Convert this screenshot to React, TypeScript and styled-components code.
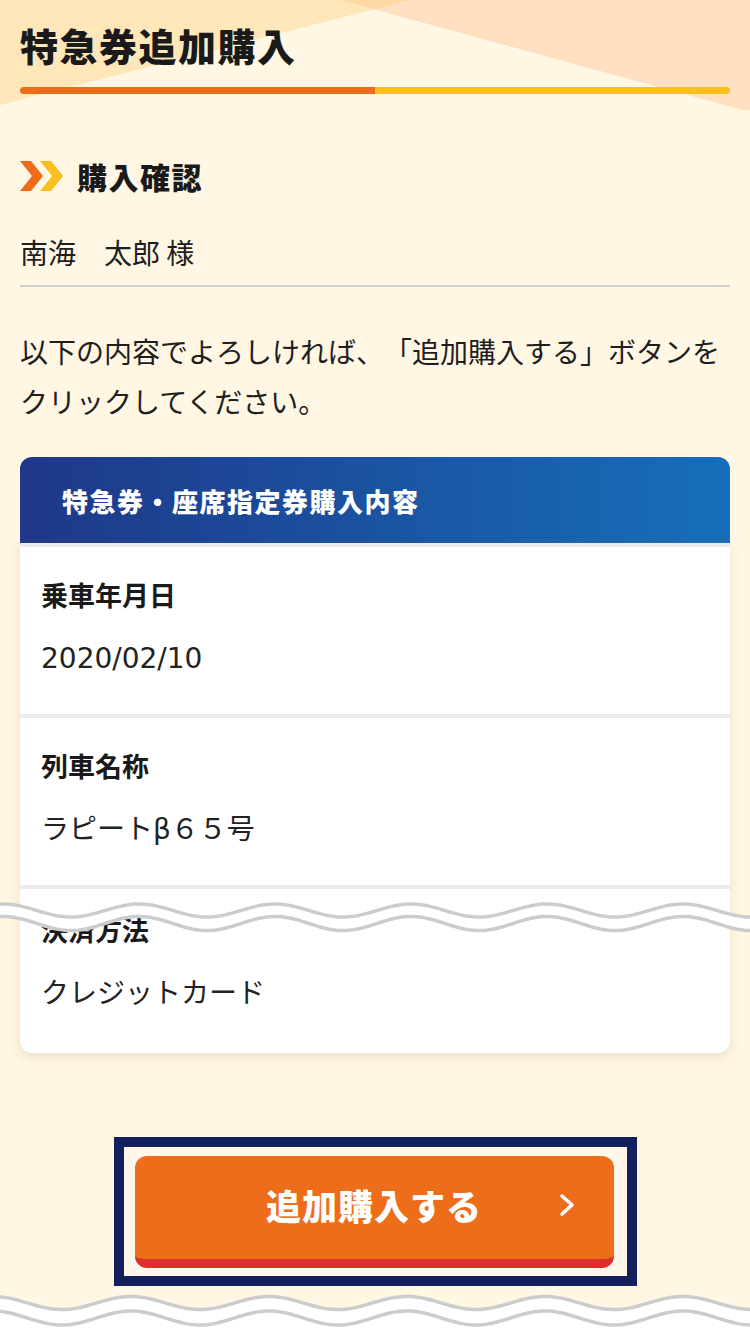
import React from "react";
import styled, { createGlobalStyle } from "styled-components";

const GlobalStyle = createGlobalStyle`
  html, body {
    margin: 0;
    padding: 0;
  }
  body {
    background: #fff6e3;
    font-family: "Noto Sans CJK JP", "Noto Sans", sans-serif;
    color: #1e1e1e;
    text-spacing-trim: space-all;
  }
`;

const Page = styled.div`
  width: 750px;
  min-height: 1334px;
  display: flex;
  flex-direction: column;
  overflow: hidden;
`;

const Header = styled.header`
  padding: 22px 20px 16px;
  background-image:
    linear-gradient(to bottom right, rgba(255, 200, 100, 0.33) 50%, transparent 50%),
    linear-gradient(to bottom left, rgba(255, 190, 140, 0.39) 50%, transparent 50%);
  background-size: 410px 105px, 410px 112px;
  background-position: left top, right top;
  background-repeat: no-repeat;
`;

const Title = styled.h1`
  margin: 0;
  font-size: 38px;
  line-height: 46px;
  font-weight: 900;
  letter-spacing: 1.5px;
  color: #1a1a1a;
`;

const Progress = styled.div`
  margin-top: 19px;
  height: 7px;
  display: flex;
  border-radius: 4px;
  overflow: hidden;
`;

const ProgressPart = styled.div<{ $color: string }>`
  flex: 1;
  background: ${(p) => p.$color};
`;

const Main = styled.main`
  padding: 46px 20px 0;
`;

const SectionHeading = styled.h2`
  margin: 0;
  display: flex;
  align-items: center;
  gap: 14px;
  font-size: 30px;
  line-height: 40px;
  font-weight: 900;
  letter-spacing: 1.5px;
  color: #1a1a1a;
`;

const Name = styled.p`
  margin: 36px 0 0;
  font-size: 28px;
  line-height: 40px;
  padding-bottom: 13px;
  border-bottom: 2px solid #cfcfcf;
`;

const Lead = styled.p`
  margin: 39px 0 0;
  font-size: 28px;
  line-height: 50px;
`;

const CardWrap = styled.section`
  position: relative;
  margin-top: 31px;
`;

const CardHeader = styled.h3`
  margin: 0;
  height: 86px;
  display: flex;
  align-items: center;
  padding-left: 42px;
  border-radius: 12px 12px 0 0;
  background: linear-gradient(90deg, #1f3788, #166fb9);
  color: #fff;
  font-size: 26px;
  font-weight: 900;
  letter-spacing: 1.5px;
`;

const CardBody = styled.div`
  display: flex;
  flex-direction: column;
  gap: 4px;
  padding-top: 4px;
  background: #ececec;
  border-radius: 0 0 12px 12px;
  box-shadow: 0 4px 10px rgba(190, 160, 110, 0.25);
`;

const Row = styled.div<{ $last?: boolean }>`
  background: #fff;
  display: flex;
  flex-direction: column;
  gap: 28px;
  padding: ${(p) => (p.$last ? "23px 21px 41px" : "30px 21px 37px")};
  border-radius: ${(p) => (p.$last ? "0 0 12px 12px" : "0")};
`;

const Label = styled.div`
  font-size: 27px;
  line-height: 36px;
  font-weight: 700;
  color: #1a1a1a;
`;

const Value = styled.div`
  font-family: "DejaVu Sans", "Noto Sans CJK JP", sans-serif;
  font-size: 28px;
  line-height: 36px;
  color: #222;
`;

const CutMark = styled.svg`
  position: absolute;
  left: -20px;
  top: 441px;
  width: 750px;
  height: 40px;
  pointer-events: none;
`;

const ButtonArea = styled.div`
  margin: 84px auto 0;
  width: 523px;
  box-sizing: border-box;
  border: 10px solid #13205b;
  padding: 9px 12px 8px 11px;
  background: #fff8ea;
`;

const PrimaryButton = styled.button`
  width: 479px;
  height: 112px;
  box-sizing: border-box;
  display: grid;
  grid-template-columns: 1fr auto 1fr;
  align-items: center;
  padding: 0 38px 6px 38px;
  border: none;
  border-bottom: 9px solid #de2f2f;
  border-radius: 12px;
  background: #ee6d1a;
  color: #fff;
  font-family: inherit;
  font-size: 35px;
  font-weight: 900;
  letter-spacing: 1px;
  cursor: pointer;

  > span {
    grid-column: 2;
  }
  > svg {
    grid-column: 3;
    justify-self: end;
  }
`;

const Footer = styled.footer`
  margin-top: auto;
  height: 48px;

  > svg {
    display: block;
  }
`;

const wave = (x0: number, cy: number, amp: number, period: number, width: number) => {
  const pts: string[] = [];
  for (let x = 0; x <= width; x += 3) {
    const y = cy - amp * Math.cos((2 * Math.PI * (x - x0)) / period);
    pts.push(`${x} ${y.toFixed(2)}`);
  }
  return pts;
};

const lineD = (pts: string[]) => "M" + pts.join(" L");

function Chevrons() {
  return (
    <svg width="43" height="30" viewBox="0 0 43 30">
      <polygon points="0,0 11,0 23,15 11,30 0,30 12,15" fill="#ec6c1a" />
      <polygon points="20,0 31,0 43,15 31,30 20,30 32,15" fill="#fbbe1e" />
    </svg>
  );
}

function CutWave() {
  const top = wave(3, 12.5, 6.5, 136, 753);
  const bottom = wave(3, 25.5, 7, 136, 753);
  const fill = "M" + top.join(" L") + " L" + [...bottom].reverse().join(" L") + " Z";
  return (
    <CutMark viewBox="0 0 750 40">
      <path d={fill} fill="#fff" />
      <path d={lineD(top)} fill="none" stroke="#cccccc" strokeWidth="3.5" />
      <path d={lineD(bottom)} fill="none" stroke="#cccccc" strokeWidth="3.5" />
    </CutMark>
  );
}

function BottomWave() {
  const top = wave(-7, 17, 6.5, 138, 753);
  const bottom = wave(-7, 32, 7, 138, 753);
  const fill = "M" + top.join(" L") + " L753 48 L0 48 Z";
  return (
    <svg width="750" height="48" viewBox="0 0 750 48">
      <path d={fill} fill="#fff" />
      <path d={lineD(top)} fill="none" stroke="#cccccc" strokeWidth="3.5" />
      <path d={lineD(bottom)} fill="none" stroke="#cccccc" strokeWidth="3.5" />
    </svg>
  );
}

const rows = [
  { label: "乗車年月日", value: "2020/02/10" },
  { label: "列車名称", value: "ラピートβ６５号" },
  { label: "決済方法", value: "クレジットカード" },
];

export default function App() {
  return (
    <>
      <GlobalStyle />
      <Page>
        <Header>
          <Title>特急券追加購入</Title>
          <Progress>
            <ProgressPart $color="#ec6c1a" />
            <ProgressPart $color="#fbbf1f" />
          </Progress>
        </Header>

        <Main>
          <SectionHeading>
            <Chevrons />
            購入確認
          </SectionHeading>
          <Name>南海　太郎 様</Name>
          <Lead>以下の内容でよろしければ、「追加購入する」ボタンをクリックしてください。</Lead>

          <CardWrap>
            <CardHeader>特急券・座席指定券購入内容</CardHeader>
            <CardBody>
              {rows.map((r, i) => (
                <Row key={r.label} $last={i === rows.length - 1}>
                  <Label>{r.label}</Label>
                  <Value>{r.value}</Value>
                </Row>
              ))}
            </CardBody>
            <CutWave />
          </CardWrap>

          <ButtonArea>
            <PrimaryButton type="button">
              <span>追加購入する</span>
              <svg width="18" height="24" viewBox="0 0 18 24">
                <polyline
                  points="4,3 14,12 4,21"
                  fill="none"
                  stroke="#fff"
                  strokeWidth="3.5"
                  strokeLinecap="round"
                  strokeLinejoin="round"
                />
              </svg>
            </PrimaryButton>
          </ButtonArea>
        </Main>

        <Footer>
          <BottomWave />
        </Footer>
      </Page>
    </>
  );
}
